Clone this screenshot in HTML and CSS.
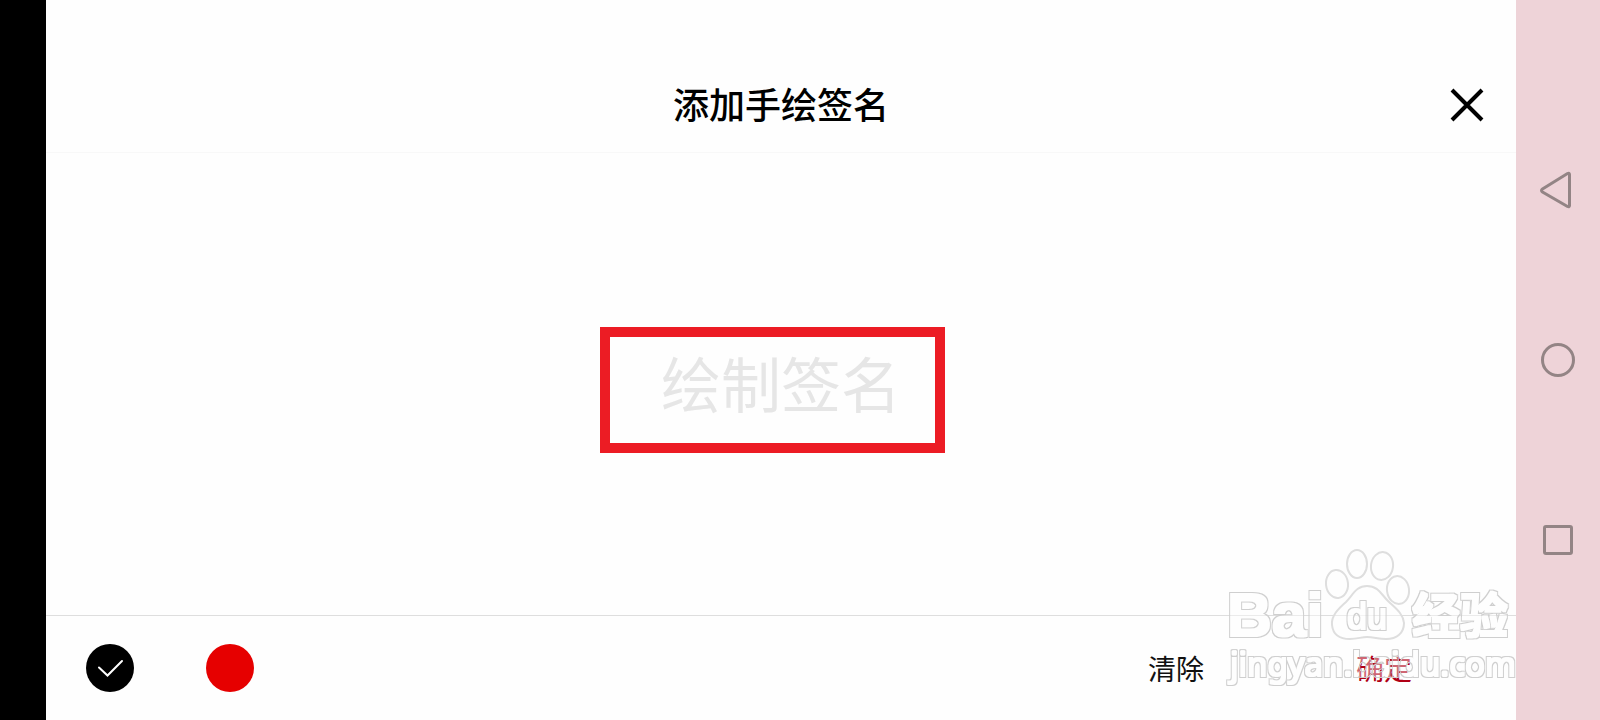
FILE: index.html
```html
<!DOCTYPE html>
<html lang="zh-CN">
<head>
<meta charset="utf-8">
<meta name="viewport" content="width=device-width, initial-scale=1">
<title>添加手绘签名</title>
<link rel="stylesheet" href="styles.css">
</head>
<body>
<div class="screen">
  <main class="app">
    <header class="header">
      <h1 class="title">添加手绘签名</h1>
      <button class="close" type="button" aria-label="关闭">
        <svg width="34" height="34" viewBox="0 0 34 34"><path d="M2 3 32 33M32 3 2 33"/></svg>
      </button>
    </header>
    <section class="board">
      <p class="hint">绘制签名</p>
      <div class="highlight"></div>
    </section>
    <footer class="toolbar">
      <div class="colors">
        <button class="color color-black" type="button" aria-label="黑色" aria-pressed="true">
          <svg width="48" height="48" viewBox="0 0 48 48"><path d="M13 23.500 21.500 31.500 36 17"/></svg>
        </button>
        <button class="color color-red" type="button" aria-label="红色" aria-pressed="false"></button>
      </div>
      <div class="actions">
        <button class="action" type="button">清除</button>
        <button class="action action-confirm" type="button">确定</button>
      </div>
    </footer>
    <svg class="watermark" width="300" height="150" viewBox="0 0 300 150">
      <defs>
        <filter id="outline" x="-5%" y="-20%" width="110%" height="140%" color-interpolation-filters="sRGB">
          <feMorphology in="SourceAlpha" operator="dilate" radius="2" result="outer"/>
          <feMorphology in="SourceAlpha" operator="dilate" radius="1" result="inner"/>
          <feComposite in="outer" in2="inner" operator="out" result="ring"/>
          <feFlood flood-color="#cfcfcf"/>
          <feComposite in2="ring" operator="in"/>
          <feGaussianBlur stdDeviation="0.5" result="edge"/>
          <feFlood flood-color="#fff" flood-opacity="0.4"/>
          <feComposite in2="inner" operator="in" result="body"/>
          <feMerge><feMergeNode in="body"/><feMergeNode in="edge"/></feMerge>
        </filter>
      </defs>
      <g class="paw">
        <ellipse cx="121" cy="44" rx="11" ry="14" transform="rotate(-6 121 44)"/>
        <ellipse cx="141" cy="24" rx="10" ry="14"/>
        <ellipse cx="166" cy="26" rx="11" ry="14" transform="rotate(8 166 26)"/>
        <ellipse cx="182" cy="50" rx="11" ry="14" transform="rotate(-8 182 50)"/>
        <path d="M151 46C140 46 137 55 130 62C122 69 115 76 116 85C117 95 124 99 134 99C142 99 145 97 151 97C158 97 162 99 170 99C181 99 188 93 188 83C187 73 179 68 172 61C165 54 162 46 151 46Z"/>
      </g>
      <text class="mark mark-latin" x="11" y="96">Bai</text>
      <text class="mark mark-du" x="131" y="89">du</text>
      <text class="mark mark-cjk" x="196" y="93">经验</text>
      <text class="mark mark-url" x="14" y="136">jingyan.baidu.com</text>
    </svg>
  </main>
  <nav class="system-nav" aria-label="系统导航">
    <button class="nav-button" type="button" aria-label="返回">
      <svg width="40" height="60" viewBox="0 0 40 60"><path d="M31.500 24.500V55.500Q31.500 57.500 29.500 56.500L4.500 42Q2.500 40.500 4.500 39L29.500 23.500Q31.500 22.500 31.500 24.500Z"/></svg>
    </button>
    <button class="nav-button" type="button" aria-label="主页">
      <svg width="40" height="40" viewBox="0 0 40 40"><circle cx="20" cy="20" r="15.500"/></svg>
    </button>
    <button class="nav-button" type="button" aria-label="最近任务">
      <svg width="40" height="40" viewBox="0 0 40 40"><rect x="6.500" y="6.500" width="27" height="27" rx="1.500"/></svg>
    </button>
  </nav>
</div>
</body>
</html>
```
FILE: styles.css
```css
* {
  box-sizing: border-box;
}

body {
  margin: 0;
  background: #fefefe;
  color: #000;
  font-family: "Noto Sans CJK SC", sans-serif;
}

button {
  padding: 0;
  border: 0;
  background: none;
  color: inherit;
  font: inherit;
  cursor: pointer;
}

svg {
  display: block;
  overflow: visible;
  fill: none;
}

.screen {
  display: flex;
  min-height: 100vh;
  border-left: 46px solid #000;
}

.app {
  position: relative;
  flex: 1;
  display: flex;
  flex-direction: column;
}

.header {
  display: grid;
  grid-template-columns: 1fr auto 1fr;
  align-items: center;
  padding: 58px 32px 3px;
  border-bottom: 1px solid #f8f8f8;
}

.title {
  grid-column: 2;
  margin: 0;
  font-size: 36px;
  font-weight: 500;
  line-height: 91px;
}

.close {
  justify-self: end;
}

.close path {
  stroke: #000;
  stroke-width: 4;
}

.board {
  position: relative;
  flex: 1;
  display: flex;
  align-items: center;
  justify-content: center;
  padding-bottom: 4px;
}

.hint {
  margin: 0;
  color: #e6e6e6;
  font-size: 60px;
  font-weight: 400;
  line-height: 88px;
}

.highlight {
  position: absolute;
  top: 174px;
  left: calc(50% - 181px);
  width: 345px;
  height: 126px;
  border: 10px solid #ec1c24;
}

.toolbar {
  display: flex;
  align-items: center;
  justify-content: space-between;
  height: 105px;
  padding: 0 104px 0 40px;
  border-top: 1px solid #dedede;
}

.colors {
  display: flex;
  gap: 72px;
}

.color {
  width: 48px;
  height: 48px;
  border-radius: 50%;
}

.color-black {
  background: #000;
}

.color-black path {
  stroke: #fff;
  stroke-width: 2;
  stroke-linecap: round;
}

.color-red {
  background: #e60000;
}

.actions {
  display: flex;
  gap: 152px;
}

.action {
  color: #111;
  font-size: 28px;
  line-height: 40px;
}

.action-confirm {
  color: #b00015;
}

.system-nav {
  display: flex;
  flex-direction: column;
  width: 84px;
  padding: 90px 0;
  background: #eed3d8;
}

.nav-button {
  flex: 1;
  display: flex;
  align-items: center;
  justify-content: center;
}

.nav-button svg {
  stroke: #938485;
  stroke-width: 3;
}

.watermark {
  position: absolute;
  right: 0;
  bottom: 30px;
  pointer-events: none;
}

.paw {
  fill: rgba(255, 255, 255, 0.4);
  stroke: #dedede;
  stroke-width: 2;
}

.mark {
  fill: #fff;
  filter: url(#outline);
}

.mark-latin {
  font: 700 62px "Liberation Sans", sans-serif;
}

.mark-du {
  font: 400 36px "Liberation Sans", sans-serif;
}

.mark-cjk {
  font: 700 48px "Noto Sans CJK SC", sans-serif;
}

.mark-url {
  font: 400 33px "Noto Sans", sans-serif;
}
```
